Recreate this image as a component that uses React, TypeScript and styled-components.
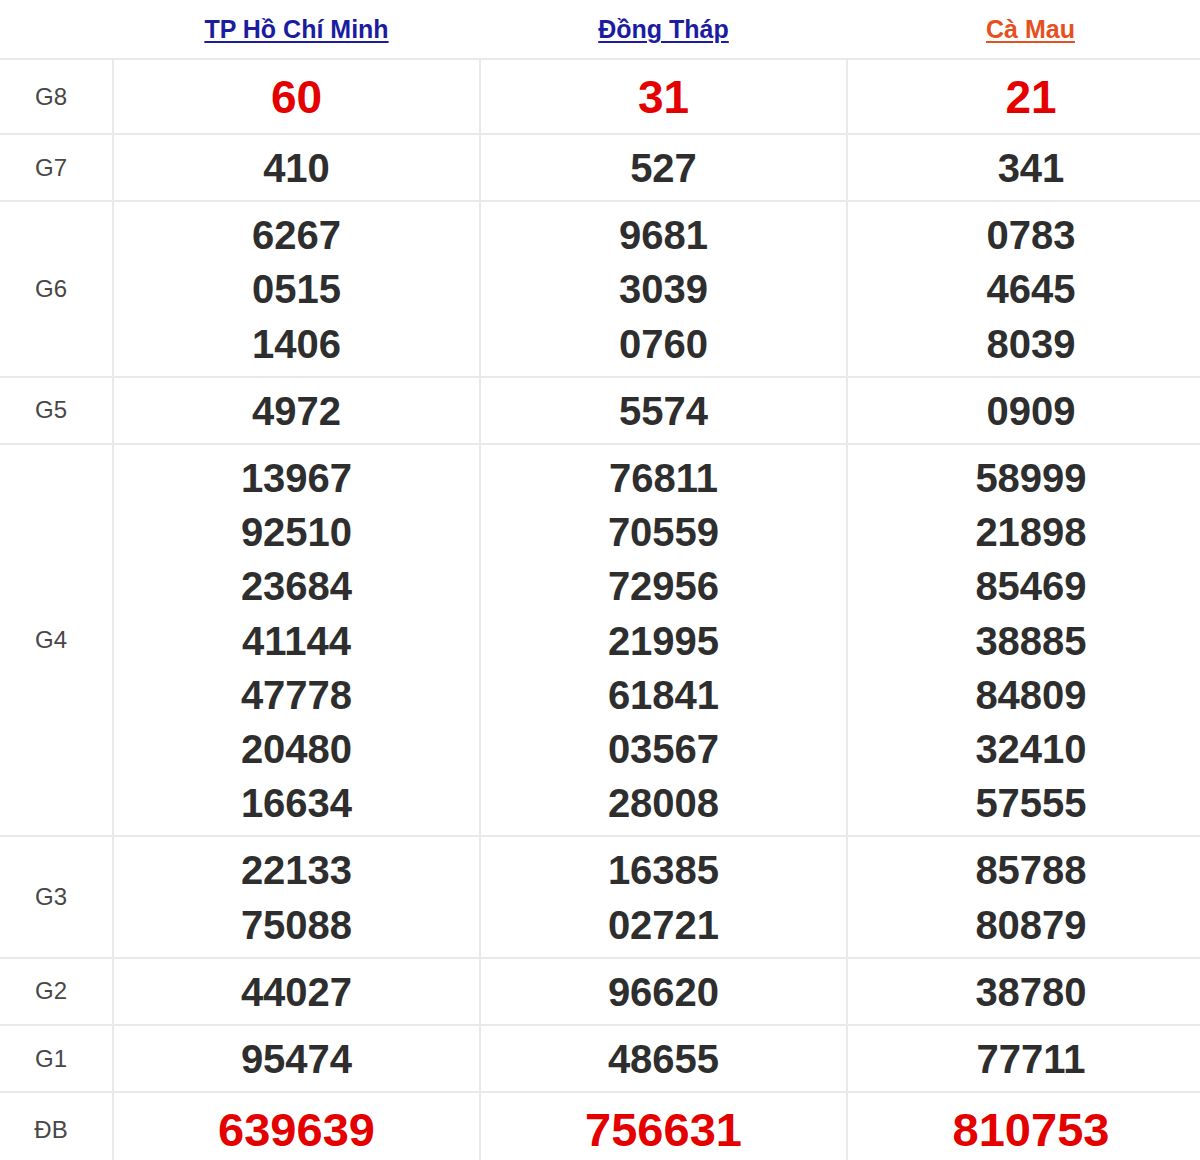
import React from 'react';
import styled, { createGlobalStyle } from 'styled-components';

const GlobalStyle = createGlobalStyle`
  html, body {
    margin: 0;
    padding: 0;
    background: #fff;
    overflow: hidden;
  }
`;

const Table = styled.table`
  width: 1214px;
  border-collapse: collapse;
  table-layout: fixed;
  font-family: 'Liberation Sans', Arial, sans-serif;
`;

const HeadCell = styled.th`
  height: 58px;
  padding: 0;
  text-align: center;
  vertical-align: middle;
  font-weight: normal;
`;

const Province = styled.a<{ $tone: 'blue' | 'orange' }>`
  font-size: 25px;
  font-weight: bold;
  color: ${(p) => (p.$tone === 'orange' ? '#e5501e' : '#1c1ca0')};
  text-decoration: underline;
  text-decoration-thickness: 2px;
  text-underline-offset: 3px;
  cursor: pointer;
`;

const Row = styled.tr`
  border-top: 2px solid #e9e9e9;
`;

const Label = styled.td`
  padding: 0 10px 0 0;
  text-align: center;
  vertical-align: middle;
  font-size: 24px;
  color: #474747;
`;

const Cell = styled.td`
  border-left: 2px solid #e9e9e9;
  padding: 6px 0 5px;
  text-align: center;
  vertical-align: middle;
`;

const Num = styled.div<{ $kind: 'normal' | 'g8' | 'db' }>`
  font-weight: bold;
  font-size: ${(p) => (p.$kind === 'normal' ? '40px' : p.$kind === 'g8' ? '46px' : '47px')};
  line-height: ${(p) => (p.$kind === 'normal' ? '54.2px' : '62px')};
  color: ${(p) => (p.$kind === 'normal' ? '#2e2e2e' : '#e50000')};
`;

type Prize = {
  label: string;
  kind: 'normal' | 'g8' | 'db';
  values: string[][];
};

const provinces: { name: string; tone: 'blue' | 'orange' }[] = [
  { name: 'TP Hồ Chí Minh', tone: 'blue' },
  { name: 'Đồng Tháp', tone: 'blue' },
  { name: 'Cà Mau', tone: 'orange' },
];

const prizes: Prize[] = [
  { label: 'G8', kind: 'g8', values: [['60'], ['31'], ['21']] },
  { label: 'G7', kind: 'normal', values: [['410'], ['527'], ['341']] },
  {
    label: 'G6',
    kind: 'normal',
    values: [
      ['6267', '0515', '1406'],
      ['9681', '3039', '0760'],
      ['0783', '4645', '8039'],
    ],
  },
  { label: 'G5', kind: 'normal', values: [['4972'], ['5574'], ['0909']] },
  {
    label: 'G4',
    kind: 'normal',
    values: [
      ['13967', '92510', '23684', '41144', '47778', '20480', '16634'],
      ['76811', '70559', '72956', '21995', '61841', '03567', '28008'],
      ['58999', '21898', '85469', '38885', '84809', '32410', '57555'],
    ],
  },
  {
    label: 'G3',
    kind: 'normal',
    values: [
      ['22133', '75088'],
      ['16385', '02721'],
      ['85788', '80879'],
    ],
  },
  { label: 'G2', kind: 'normal', values: [['44027'], ['96620'], ['38780']] },
  { label: 'G1', kind: 'normal', values: [['95474'], ['48655'], ['77711']] },
  { label: 'ĐB', kind: 'db', values: [['639639'], ['756631'], ['810753']] },
];

export default function App() {
  return (
    <>
      <GlobalStyle />
      <Table>
        <colgroup>
          <col style={{ width: 113 }} />
          <col style={{ width: 367 }} />
          <col style={{ width: 367 }} />
          <col style={{ width: 367 }} />
        </colgroup>
        <thead>
          <tr>
            <HeadCell />
            {provinces.map((p) => (
              <HeadCell key={p.name}>
                <Province $tone={p.tone}>{p.name}</Province>
              </HeadCell>
            ))}
          </tr>
        </thead>
        <tbody>
          {prizes.map((prize) => (
            <Row key={prize.label}>
              <Label>{prize.label}</Label>
              {prize.values.map((nums, i) => (
                <Cell key={i}>
                  {nums.map((n, j) => (
                    <Num key={j} $kind={prize.kind}>
                      {n}
                    </Num>
                  ))}
                </Cell>
              ))}
            </Row>
          ))}
        </tbody>
      </Table>
    </>
  );
}
